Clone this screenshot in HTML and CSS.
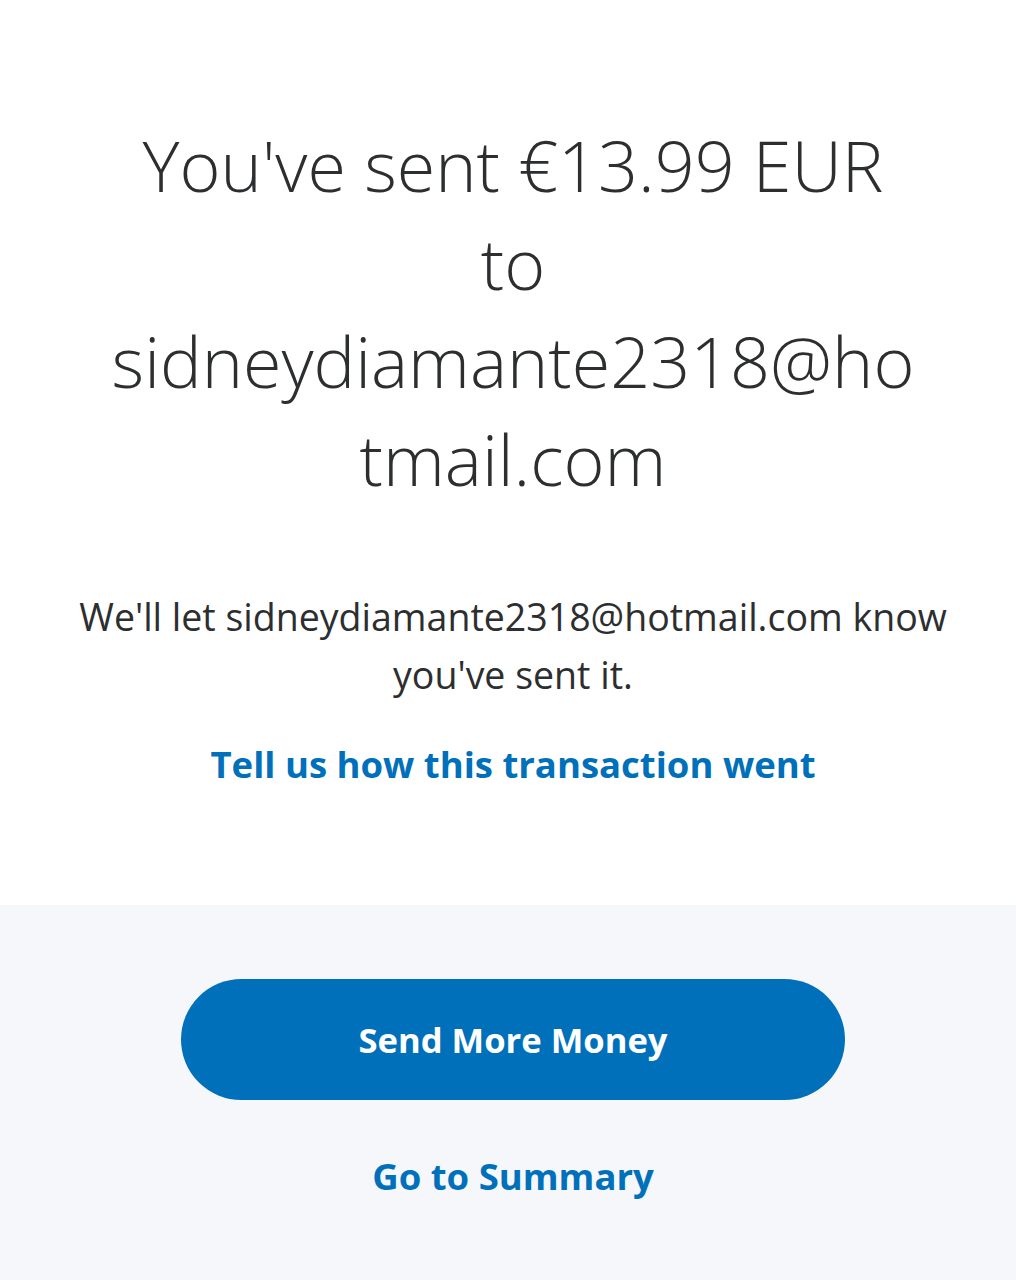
FILE: index.html
```html
<!DOCTYPE html>
<html lang="en">
<head>
    <meta charset="UTF-8">
    <meta name="viewport" content="width=device-width, initial-scale=1.0">
    <title>Payment Sent</title>
    <link rel="stylesheet" href="styles.css">
</head>
<body>

    <div class="confirm">
        <h1>You've sent €13.99 EUR to <span class="email">sidneydiamante2318@ho<wbr>tmail.com</span></h1>
        <p class="note">We'll let sidneydiamante2318@hotmail.com know you've sent it.</p>
        <a class="link" href="#">Tell us how this transaction went</a>
    </div>

    <div class="actions">
        <a class="btn" href="#">Send More Money</a>
        <a class="link" href="#">Go to Summary</a>
    </div>

</body>
</html>
```

FILE: styles.css
```css
body {
    font-family: "Open Sans", "Noto Sans", sans-serif;
    margin: 0;
    min-height: 100vh;
    display: flex;
    flex-direction: column;
    color: #2c2e2f;
    text-align: center;
}
.confirm {
    padding: 116px 100px 112px 110px;
}
h1 {
    font-size: 70px;
    font-weight: 300;
    line-height: 98px;
    margin: 0 auto;
    max-width: 808px;
}
.note {
    font-size: 37.5px;
    line-height: 58px;
    margin: 80px -40px 31px;
}
.link {
    display: inline-block;
    color: #0070ba;
    font-size: 36.5px;
    font-weight: 700;
    line-height: 58px;
    text-decoration: none;
}
.actions {
    flex: 1;
    background-color: #f5f7fa;
    padding: 74px 0 60px 10px;
    display: flex;
    flex-direction: column;
    align-items: center;
}
.btn {
    width: 664px;
    height: 121px;
    line-height: 121px;
    border-radius: 61px;
    background-color: #0070ba;
    color: #fff;
    font-size: 34.6px;
    font-weight: 700;
    text-decoration: none;
    margin-bottom: 47px;
}
```
